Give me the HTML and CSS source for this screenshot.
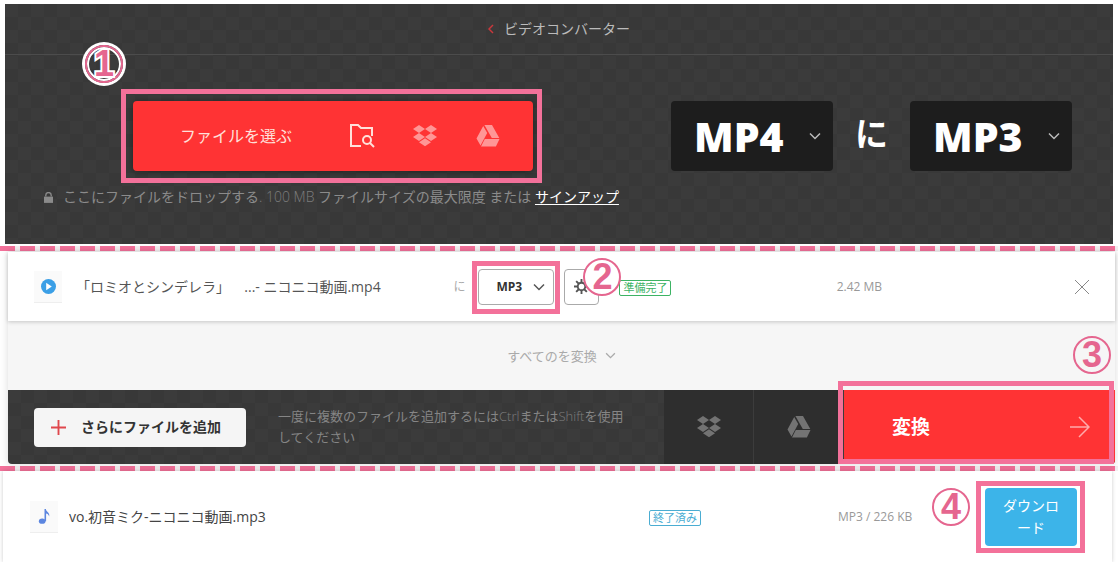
FILE: index.html
```html
<!DOCTYPE html>
<html lang="ja">
<head>
    <meta charset="UTF-8">
    <meta name="viewport" content="width=device-width, initial-scale=1.0">
    <title>ビデオコンバーター</title>
    <link rel="stylesheet" href="styles.css">
</head>
<body>
    <!-- shared icons -->
    <svg class="sprite" aria-hidden="true">
        <symbol id="dropbox" viewBox="0 0 24 22">
            <path d="M6 0l6 4-6 4-6-4zM18 0l6 4-6 4-6-4zM6 8l6 4-6 4-6-4zM18 8l6 4-6 4-6-4zM6 17.200l6-4 6 4-6 4z"/>
        </symbol>
        <symbol id="drive" viewBox="0 0 24 22">
            <path d="M8 0h8l7.300 13h-7.500L8.400 0zM7.200 1l4 7L4.500 20.500 .5 13.500zM8.800 14h14.700l-3.600 7.500H5z"/>
        </symbol>
        <symbol id="chevron" viewBox="0 0 12 8">
            <path d="M1 1.500l5 5 5-5" fill="none" stroke="currentColor" stroke-width="1.500"/>
        </symbol>
    </svg>

    <section class="hero">
        <header class="hero-title">
            <svg class="back" viewBox="0 0 6 10"><path d="M5 1L1 5l4 4" fill="none" stroke="currentColor" stroke-width="1.500"/></svg>
            <a href="#">ビデオコンバーター</a>
        </header>
        <div class="hero-body">
            <div class="upload">
                <div class="picker">
                    <button class="picker-main">ファイルを選ぶ</button>
                    <button class="picker-icon folder" aria-label="フォルダ">
                        <svg class="line" viewBox="0 0 26 26" stroke="currentColor" stroke-width="2">
                            <path d="M12 23H2V2h7l3 3h11v8"/>
                            <circle cx="18" cy="17" r="4"/>
                            <path d="M21 20l4 4"/>
                        </svg>
                    </button>
                    <button class="picker-icon" aria-label="Dropbox"><svg><use href="#dropbox"/></svg></button>
                    <button class="picker-icon" aria-label="Google Drive"><svg><use href="#drive"/></svg></button>
                    <span class="mark mark-pick"></span>
                    <span class="step step-one">1</span>
                </div>
                <p class="hint">
                    <svg class="lock" viewBox="0 0 10 12"><path d="M0 5h10v7H0z" fill="currentColor"/><path d="M2 5V3.500a3 3 0 0 1 6 0V5" fill="none" stroke="currentColor" stroke-width="1.500"/></svg>
                    <span>ここにファイルをドロップする<span class="dim">. 100 MB</span> ファイルサイズの最大限度 または <a href="#">サインアップ</a></span>
                </p>
            </div>
            <div class="formats">
                <div class="format">
                    <select aria-label="変換元"><option>MP4</option></select>
                    <svg><use href="#chevron"/></svg>
                </div>
                <span class="to">に</span>
                <div class="format">
                    <select aria-label="変換先"><option>MP3</option></select>
                    <svg><use href="#chevron"/></svg>
                </div>
            </div>
        </div>
    </section>

    <div class="divider"></div>

    <section class="queue">
        <div class="row queue-row">
            <span class="thumb"><svg viewBox="0 0 16 16"><circle cx="8" cy="8" r="8" fill="#3b9fe6"/><path d="M5.500 4l6 4-6 4z" fill="#fff"/></svg></span>
            <span class="name">「ロミオとシンデレラ」　&nbsp;&nbsp;...- ニコニコ動画.mp4</span>
            <span class="small-to">に</span>
            <div class="small-format">
                <select aria-label="形式"><option>MP3</option></select>
                <svg><use href="#chevron"/></svg>
                <span class="mark mark-format"></span>
            </div>
            <div class="settings">
                <button aria-label="設定">
                    <svg class="line" viewBox="0 0 16 16" stroke="currentColor" stroke-width="2"><circle cx="8" cy="8" r="4"/><path d="M8 0v4M8 12v4M0 8h4M12 8h4M2.300 2.300l2.800 2.800M10.900 10.900l2.800 2.800M2.300 13.700l2.800-2.800M10.900 5.100l2.800-2.800"/></svg>
                </button>
                <span class="step step-two">2</span>
            </div>
            <span><span class="badge ready">準備完了</span></span>
            <span class="size">2.42 MB</span>
            <button class="close" aria-label="削除"><svg viewBox="0 0 16 16"><path d="M1 1l14 14M15 1L1 15" stroke="currentColor" stroke-width="1"/></svg></button>
        </div>
        <div class="all">
            <button>すべてのを変換 <svg><use href="#chevron"/></svg></button>
            <span class="step step-three">3</span>
        </div>
        <div class="actions">
            <button class="add"><svg viewBox="0 0 16 16"><path d="M8 0v16M0 8h16" stroke="currentColor" stroke-width="2"/></svg>さらにファイルを追加</button>
            <p>一度に複数のファイルを追加するには<span class="dim">Ctrl</span>または<span class="dim">Shift</span>を使用<br>してください</p>
            <button class="cloud" aria-label="Dropbox"><svg><use href="#dropbox"/></svg></button>
            <button class="cloud" aria-label="Google Drive"><svg><use href="#drive"/></svg></button>
            <div class="convert">
                <button>変換 <svg class="line" viewBox="0 0 20 22"><path d="M0 11h19M9 1l10 10L9 21" stroke="currentColor" stroke-width="1.500"/></svg></button>
                <span class="mark mark-convert"></span>
            </div>
        </div>
    </section>

    <div class="divider"></div>

    <section class="row done">
        <span class="thumb"><svg viewBox="0 0 16 16"><ellipse cx="5.500" cy="13" rx="3.500" ry="2.800" fill="#5c86e0"/><path d="M8 13V0h1.500c0 3 4.500 3.500 3.500 8-.600-2.300-2-3-3.300-3.300V13z" fill="#5c86e0"/></svg></span>
        <span class="name">vo.初音ミク-ニコニコ動画.mp3</span>
        <span><span class="badge finished">終了済み</span></span>
        <span class="size">MP3 / 226 KB</span>
        <div class="download">
            <button>ダウンロード</button>
            <span class="mark mark-download"></span>
            <span class="step step-four">4</span>
        </div>
    </section>
</body>
</html>
```

FILE: styles.css
```css
* {
    box-sizing: border-box;
}

body {
    margin: 0;
    background-color: #fff;
    color: #555;
    font-family: 'Open Sans', 'Noto Sans CJK JP', sans-serif;
    font-size: 14px;
    line-height: 20px;
}

button,
select {
    margin: 0;
    padding: 0;
    border: none;
    background: none;
    color: inherit;
    font: inherit;
    cursor: pointer;
}

select {
    appearance: none;
}

svg {
    display: block;
    fill: currentColor;
}

svg.line {
    fill: none;
}

.sprite {
    position: absolute;
    width: 0;
    height: 0;
}

.hero,
.actions {
    background: repeating-conic-gradient(#383838 0 25%, #3b3b3b 0 50%) 0 0 / 26px 26px;
}

/* top panel */
.hero {
    margin: 4px 5px 2px;
}

.hero-title {
    display: flex;
    align-items: center;
    justify-content: center;
    gap: 10px;
    height: 51px;
    border-bottom: 1px solid #4c4c4c;
}

.hero-title a {
    color: #bbb;
    text-decoration: none;
}

.back {
    width: 6px;
    height: 10px;
    color: #c9383c;
}

.hero-body {
    display: flex;
    justify-content: space-between;
    padding: 46px 41px 37px 39px;
}

.picker {
    position: relative;
    display: flex;
    align-items: center;
    width: 400px;
    height: 70px;
    margin-left: 89px;
    padding: 0 14px 0 47px;
    border-radius: 4px;
    background-color: #ff3334;
    box-shadow: 0 1px 6px rgba(0, 0, 0, 0.4);
    color: #ffe0da;
}

.picker-main {
    flex: 1;
    font-size: 16px;
    text-align: left;
}

.picker-icon {
    display: flex;
    justify-content: center;
    width: 63px;
    color: #ff9696;
}

.picker-icon svg {
    width: 24px;
    height: 22px;
}

.picker-icon.folder {
    color: #ffe0da;
}

.picker-icon.folder svg {
    width: 26px;
    height: 26px;
}

.hint {
    display: flex;
    align-items: center;
    gap: 10px;
    margin: 16px 0 0;
    color: #8b8b8b;
}

.hint a {
    color: #fff;
    text-underline-offset: 2px;
}

.lock {
    width: 9px;
    height: 11px;
}

.dim {
    color: #7d7d7d;
    font-weight: 300;
}

.formats {
    display: flex;
    gap: 22px;
    height: 70px;
}

.format,
.small-format {
    position: relative;
}

.format select {
    width: 162px;
    height: 70px;
    padding-left: 23px;
    border-radius: 4px;
    background-color: #1d1d1d;
    color: #fff;
    font-size: 41px;
    font-weight: 800;
    line-height: 70px;
}

.format svg,
.small-format svg {
    position: absolute;
    top: 50%;
    right: 12px;
    width: 12px;
    height: 8px;
    margin-top: -4px;
    color: #bbb;
    pointer-events: none;
}

.to {
    color: #fff;
    font-size: 33px;
    font-weight: 700;
    line-height: 66px;
}

.divider {
    height: 5px;
    background: repeating-linear-gradient(90deg, #f3719a 0 15px, #f3eef0 15px 20px);
}

/* file rows */
.row {
    display: grid;
    align-items: center;
    background-color: #fff;
}

.thumb {
    display: flex;
    align-items: center;
    justify-content: center;
    width: 28px;
    height: 32px;
    background-color: #fafafa;
    border-bottom: 1px solid #eee;
}

.thumb svg {
    width: 15px;
    height: 15px;
}

.name {
    overflow: hidden;
    white-space: nowrap;
}

.size {
    color: #999;
    font-size: 12px;
}

.badge {
    display: inline-block;
    padding: 0 3px;
    border: 1px solid;
    border-radius: 2px;
    font-size: 11px;
    line-height: 14px;
    vertical-align: middle;
}

.ready {
    color: #3db364;
}

.finished {
    color: #4badd2;
}

.queue {
    position: relative;
    margin: 1px 3px 2px 8px;
    background-color: #f6f6f6;
    box-shadow: 0 0 8px rgba(0, 0, 0, 0.15);
}

.queue-row {
    grid-template-columns: 42px 377fr 25px 86px 55px 217fr 237fr 19px;
    height: 69px;
    padding: 0 22px 0 26px;
    box-shadow: 0 1px 4px rgba(0, 0, 0, 0.2);
}

.small-to {
    color: #aaa;
    font-size: 12px;
}

.small-format {
    width: 76px;
}

.small-format select {
    display: block;
    width: 76px;
    height: 36px;
    padding-left: 17px;
    border: 1px solid #aaa;
    border-radius: 4px;
    color: #333;
    font-size: 12px;
    font-weight: 700;
}

.small-format svg {
    right: 9px;
    color: #555;
}

.settings {
    position: relative;
}

.settings button {
    display: flex;
    align-items: center;
    justify-content: center;
    width: 35px;
    height: 36px;
    border: 1px solid #aaa;
    border-radius: 4px;
}

.settings button svg {
    width: 15px;
    height: 15px;
}

.close {
    color: #888;
}

.close svg {
    width: 16px;
    height: 16px;
}

.all {
    position: relative;
    display: flex;
    align-items: center;
    justify-content: center;
    height: 69px;
}

.all button {
    display: flex;
    align-items: center;
    gap: 8px;
    color: #aaa;
    font-size: 13px;
}

.all svg {
    width: 11px;
    height: 7px;
}

.actions {
    display: grid;
    grid-template-columns: 212px 418fr 90px 90px 271fr;
    height: 74px;
    padding-left: 26px;
    border-radius: 0 0 4px 4px;
}

.add {
    display: flex;
    align-items: center;
    align-self: center;
    gap: 15px;
    height: 39px;
    padding-left: 17px;
    border-radius: 4px;
    background-color: #f5f5f5;
    color: #333;
    font-weight: 700;
}

.add svg {
    width: 15px;
    height: 15px;
    color: #e0474c;
}

.actions p {
    align-self: center;
    margin: 0 32px;
    color: #858585;
    font-size: 13px;
    line-height: 21px;
}

.cloud {
    display: flex;
    align-items: center;
    justify-content: center;
    border-right: 1px solid #3c3c3c;
    background-color: #2e2e2e;
    color: #737373;
}

.cloud svg {
    width: 24px;
    height: 22px;
}

.convert {
    position: relative;
    display: grid;
}

.convert button {
    display: flex;
    align-items: center;
    justify-content: space-between;
    padding: 0 25px 0 48px;
    border-radius: 0 0 4px 0;
    background-color: #ff3334;
    color: #fff;
    font-size: 19px;
    font-weight: 700;
}

.convert svg {
    width: 20px;
    height: 22px;
    color: #ffabab;
}

.done {
    grid-template-columns: 39px 580fr 189fr 147fr 92px;
    height: 91px;
    margin: 0 6px 0 3px;
    padding: 0 35px 0 27px;
    box-shadow: 0 3px 1px #e6e6e6, 0 0 4px rgba(0, 0, 0, 0.2);
}

.done .name {
    color: #444;
}

.download {
    position: relative;
}

.download button {
    display: block;
    width: 100%;
    padding: 7px 18px;
    border-radius: 4px;
    background-color: #3cb4e9;
    color: #fff;
    line-height: 22px;
    word-break: break-all;
}

/* tutorial marks drawn over the page */
.mark {
    position: absolute;
    border: 5px solid #f3719a;
    pointer-events: none;
}

.mark-pick {
    inset: -12px -9px -12px -12px;
}

.mark-format {
    inset: -8px -6px -9px -6px;
}

.mark-convert {
    inset: -9px 1px 0 -6px;
}

.mark-download {
    inset: -7px -8px -7px -9px;
}

.step {
    position: absolute;
    z-index: 1;
    width: 38px;
    height: 38px;
    border: 2px solid #e5668f;
    border-radius: 50%;
    color: #e5668f;
    font-family: 'Liberation Sans', sans-serif;
    font-size: 36px;
    font-weight: 700;
    line-height: 34px;
    text-align: center;
    pointer-events: none;
}

.step-one {
    top: -56px;
    left: -48px;
    box-shadow: 0 0 0 3px #fff, inset 0 0 0 2px #fff;
    -webkit-text-stroke: 4px #fff;
    paint-order: stroke fill;
}

.step-two {
    top: -11px;
    left: 19px;
    background-color: #fff;
}

.step-three {
    top: 15px;
    right: 4px;
}

.step-four {
    top: 0;
    left: -53px;
}
```
